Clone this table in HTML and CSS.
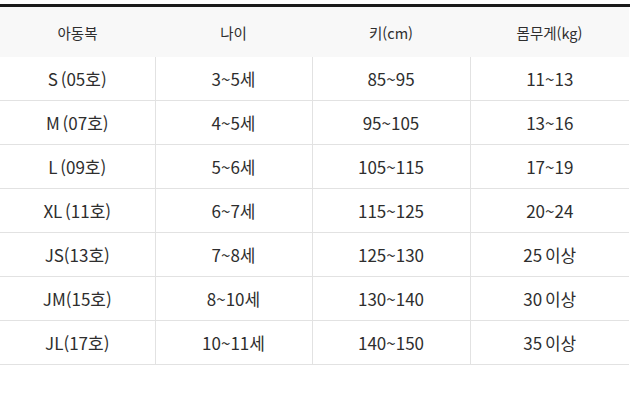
FILE: index.html
```html
<!DOCTYPE html>
<html lang="ko">
<head>
<meta charset="utf-8">
<link rel="stylesheet" href="styles.css">
</head>
<body>
<div class="wrap">
<div class="topline"></div>
<table class="size-table">
  <colgroup>
    <col class="c1"><col class="c2"><col class="c3"><col class="c4">
  </colgroup>
  <thead>
    <tr><th>아동복</th><th>나이</th><th>키(cm)</th><th>몸무게(kg)</th></tr>
  </thead>
  <tbody>
    <tr><td>S (05호)</td><td>3~5세</td><td>85~95</td><td>11~13</td></tr>
    <tr><td>M (07호)</td><td>4~5세</td><td>95~105</td><td>13~16</td></tr>
    <tr><td>L (09호)</td><td>5~6세</td><td>105~115</td><td>17~19</td></tr>
    <tr><td>XL (11호)</td><td>6~7세</td><td>115~125</td><td>20~24</td></tr>
    <tr><td>JS(13호)</td><td>7~8세</td><td>125~130</td><td>25 이상</td></tr>
    <tr><td>JM(15호)</td><td>8~10세</td><td>130~140</td><td>30 이상</td></tr>
    <tr><td>JL(17호)</td><td>10~11세</td><td>140~150</td><td>35 이상</td></tr>
  </tbody>
</table>
</div>
</body>
</html>
```
FILE: styles.css
```css
html, body {
  margin: 0;
  padding: 0;
  background: #ffffff;
}
body {
  font-family: "Noto Sans CJK KR", "Noto Sans", sans-serif;
  color: #2e2e2e;
  padding-top: 4px;
}
.wrap {
  width: 630px;
}
.topline {
  height: 3px;
  background: #1a1a1a;
}
.size-table {
  width: 629px;
  border-collapse: collapse;
  table-layout: fixed;
}
.c1 { width: 155px; }
.c2 { width: 157px; }
.c3 { width: 158px; }
.c4 { width: 159px; }
.size-table th {
  height: 50px;
  padding: 0;
  background: #f8f8f8;
  font-size: 14.5px;
  font-weight: 400;
  text-align: center;
  vertical-align: middle;
  color: #2e2e2e;
}
.size-table td {
  height: 43px;
  padding: 0;
  font-size: 17px;
  word-spacing: -2px;
  text-align: center;
  vertical-align: middle;
  border-bottom: 1px solid #e2e2e2;
  border-left: 1px solid #e2e2e2;
}
.size-table td:first-child {
  border-left: none;
}
```
